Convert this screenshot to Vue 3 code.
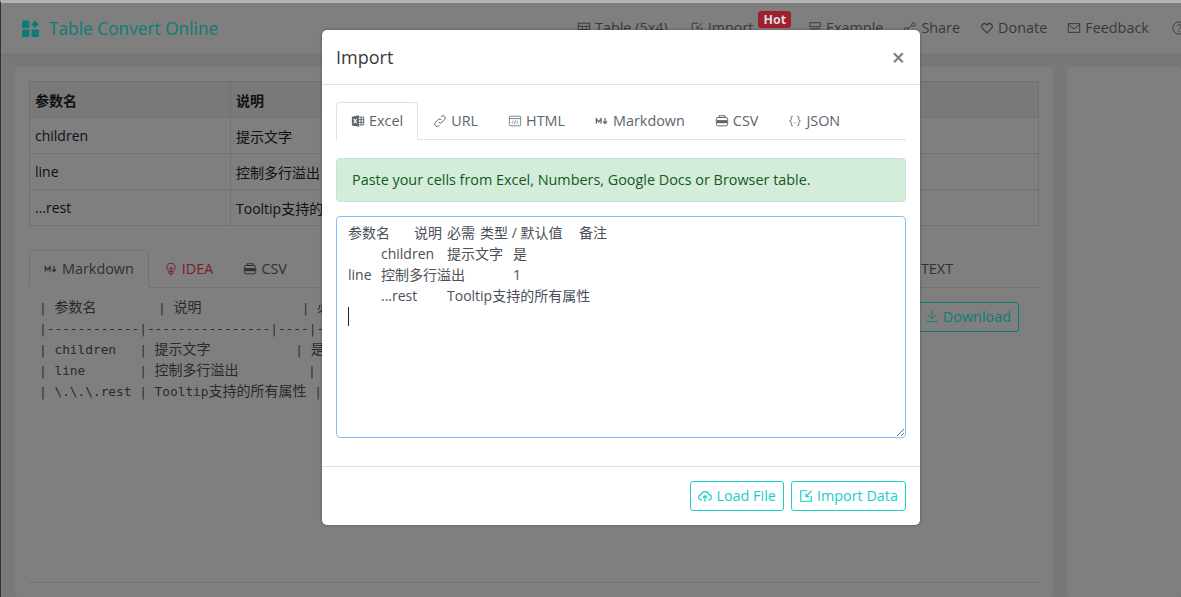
<script setup>
const navItems = [
  { label: 'Table (5x4)', icon: 'table' },
  { label: 'Import', icon: 'import', badge: 'Hot' },
  { label: 'Example', icon: 'example' },
  { label: 'Share', icon: 'share' },
  { label: 'Donate', icon: 'heart' },
  { label: 'Feedback', icon: 'mail' },
  { label: '', icon: 'help' }
]

const pageTabs = [
  { label: 'Markdown', icon: 'md', active: true },
  { label: 'IDEA', icon: 'bulb', danger: true },
  { label: 'CSV', icon: 'csv' }
]

const modalTabs = [
  { label: 'Excel', icon: 'excel', active: true },
  { label: 'URL', icon: 'link' },
  { label: 'HTML', icon: 'html' },
  { label: 'Markdown', icon: 'md' },
  { label: 'CSV', icon: 'csv' },
  { label: 'JSON', icon: 'json' }
]

const rows = [
  ['children', '提示文字'],
  ['line', '控制多行溢出'],
  ['...rest', 'Tooltip支持的所有属性']
]

const pasted = '参数名\t说明\t必需\t类型 / 默认值\t备注\n\tchildren\t提示文字\t是\nline\t控制多行溢出\t\t1\n\t...rest\tTooltip支持的所有属性\n'
</script>

<template>
  <div class="screen">
    <div class="page">
      <header class="topbar">
        <div class="brand">
          <svg class="brand-icon" viewBox="0 0 16 16" fill="currentColor">
            <rect x="0" y="0.5" width="7" height="7" rx="1" />
            <path d="M12.2 0.4 L15.8 4 L12.2 7.6 L8.6 4 Z" />
            <rect x="0" y="9" width="7" height="7" rx="1" />
            <rect x="9" y="9" width="7" height="7" rx="1" />
          </svg>
          <span>Table Convert Online</span>
        </div>
        <nav class="nav">
          <a v-for="item in navItems" :key="item.icon" class="nav-item">
            <svg class="icon" viewBox="0 0 16 16" fill="none" stroke="currentColor" stroke-width="1.1">
              <template v-if="item.icon === 'table'">
                <rect x="1.5" y="2.5" width="13" height="11" />
                <path d="M1.5 6h13M1.5 9.7h13M6 6v7.5M10.5 6v7.5" />
              </template>
              <template v-else-if="item.icon === 'import'">
                <path d="M13.5 7v6.5h-11v-11h7" />
                <path d="M14 2.5 8 8.5M8 5v3.7h3.7" />
              </template>
              <template v-else-if="item.icon === 'example'">
                <rect x="2" y="2" width="12" height="4.5" />
                <path d="M2 9h12M2 11.5h12M2 14h8" />
              </template>
              <template v-else-if="item.icon === 'share'">
                <circle cx="3.5" cy="9.5" r="2" />
                <circle cx="12" cy="4" r="2" />
                <circle cx="12" cy="13" r="2" />
                <path d="M5.2 8.4 10.3 5.1M5.3 10.4l5 1.9" />
              </template>
              <template v-else-if="item.icon === 'heart'">
                <path d="M8 13.5 2.7 8.2a3.2 3.2 0 0 1 4.5-4.5l.8.8.8-.8a3.2 3.2 0 0 1 4.5 4.5Z" stroke-width="1.4" />
              </template>
              <template v-else-if="item.icon === 'mail'">
                <rect x="1.5" y="3" width="13" height="10" />
                <path d="M1.5 4 8 9l6.500-5" />
              </template>
              <template v-else>
                <circle cx="8" cy="8" r="7" />
                <path d="M5.8 6.2a2.2 2.2 0 1 1 3.4 1.9C8.4 8.6 8 9 8 10M8 11.4v1.2" />
              </template>
            </svg>
            <span v-if="item.label">{{ item.label }}</span>
            <b v-if="item.badge" class="hot">{{ item.badge }}</b>
          </a>
        </nav>
      </header>

      <main class="content">
        <section class="card card-main">
          <table class="params">
            <thead>
              <tr>
                <th class="col-name">参数名</th>
                <th>说明</th>
              </tr>
            </thead>
            <tbody>
              <tr v-for="row in rows" :key="row[0]">
                <td v-for="(cell, i) in row" :key="i">{{ cell }}</td>
              </tr>
            </tbody>
          </table>

          <div class="tabs page-tabs">
            <a
              v-for="tab in pageTabs"
              :key="tab.label"
              class="tab"
              :class="{ active: tab.active, danger: tab.danger }"
            >
              <svg class="icon" viewBox="0 0 16 16" fill="none" stroke="currentColor" stroke-width="1.1">
                <template v-if="tab.icon === 'md'">
                  <path d="M1.5 11V5.5L4.2 9l2.7-3.5V11" stroke-width="1.4" />
                  <path d="M11.5 4.5v6M9.3 8.5l2.2 2.5 2.2-2.5" stroke-width="1.4" />
                </template>
                <template v-else-if="tab.icon === 'bulb'">
                  <circle cx="8" cy="6.2" r="4.7" />
                  <path d="M5.6 8 8 6.2 10.4 8M8 11V7M5.8 11h4.4v2.3H5.8zM7 15h2" />
                </template>
                <template v-else>
                  <path d="M4.5 4V2h7v2" />
                  <rect x="1.5" y="4" width="13" height="9.5" rx="2" />
                  <rect x="2" y="7" width="12" height="3.5" fill="currentColor" stroke="none" />
                </template>
              </svg>
              <span>{{ tab.label }}</span>
            </a>
            <a class="tab tab-text"><span>TEXT</span></a>
          </div>

          <div class="pane">
            <pre class="markdown"><i>|</i> <span class="cjk">参数名</span>        <i>|</i> <span class="cjk">说明</span>             <i>|</i> <span class="cjk">必需</span>
<i>|</i>------------<i>|</i>----------------<i>|</i>----<i>|</i>--------
<i>|</i> children   <i>|</i> <span class="cjk">提示文字</span>           <i>|</i> <span class="cjk">是</span>
<i>|</i> line       <i>|</i> <span class="cjk">控制多行溢出</span>         <i>|</i>
<i>|</i> \.\.\.rest <i>|</i> Tooltip<span class="cjk">支持的所有属性</span> <i>|</i></pre>
            <a class="download">
              <svg class="icon" viewBox="0 0 16 16" fill="none" stroke="currentColor" stroke-width="1.1">
                <path d="M8 1.5v9.5M3 6.5 8 11l5-4.5M1.5 14.5h13" />
              </svg>
              <span>Download</span>
            </a>
          </div>

          <hr class="divider" />
        </section>
        <aside class="card card-side"></aside>
      </main>
    </div>

    <div class="backdrop"></div>

    <div class="modal">
      <div class="modal-header">
        <h5>Import</h5>
        <span class="close">×</span>
      </div>
      <div class="modal-body">
        <div class="tabs modal-tabs">
          <a
            v-for="tab in modalTabs"
            :key="tab.label"
            class="tab"
            :class="{ active: tab.active }"
          >
            <svg class="icon" viewBox="0 0 16 16" fill="none" stroke="currentColor" stroke-width="1.1">
              <template v-if="tab.icon === 'excel'">
                <path d="M1 3 9 1.5v13L1 13Z" fill="currentColor" stroke="none" />
                <path d="M3.2 5.6 6.5 10.4M6.5 5.6 3.2 10.4" stroke="#fff" stroke-width="1.2" />
                <path d="M9 3.5h5.5v9H9M9 6.5h5.5M9 9.5h5.5M11.5 3.5v9" />
              </template>
              <template v-else-if="tab.icon === 'link'">
                <path d="M6.6 9.4a2.6 2.6 0 0 0 3.7 0l3-3a2.6 2.6 0 0 0-3.7-3.7l-1 1" />
                <path d="M9.4 6.6a2.6 2.6 0 0 0-3.7 0l-3 3a2.6 2.6 0 0 0 3.7 3.7l1-1" />
              </template>
              <template v-else-if="tab.icon === 'html'">
                <rect x="1.5" y="2.5" width="13" height="11" rx="1" stroke-width="0.9" />
                <path d="M1.5 5.3h13" stroke-width="0.9" />
                <path d="M6 7.6 4.4 9.4 6 11.2M10 7.6l1.6 1.8L10 11.2M8.7 7.4l-1.4 4" stroke-width="0.8" />
              </template>
              <template v-else-if="tab.icon === 'md'">
                <path d="M1.5 11V5.5L4.2 9l2.7-3.5V11" stroke-width="1.4" />
                <path d="M11.5 4.5v6M9.3 8.5l2.2 2.5 2.2-2.5" stroke-width="1.4" />
              </template>
              <template v-else-if="tab.icon === 'csv'">
                <path d="M4.5 4V2h7v2" />
                <rect x="1.5" y="4" width="13" height="9.5" rx="2" />
                <rect x="2" y="7" width="12" height="3.5" fill="currentColor" stroke="none" />
              </template>
              <template v-else>
                <path d="M5.5 2.5c-2.400 0-1.800 1.500-1.800 3S3.500 7.500 1.800 8c1.700.5 1.900 1 1.900 2.500s-.6 3 1.800 3M10.500 2.500c2.400 0 1.800 1.500 1.800 3s.2 2 1.900 2.500c-1.700.5-1.900 1-1.900 2.500s.6 3-1.800 3" />
                <path d="M6.500 10.200h.8M8.700 10.200h.8" />
              </template>
            </svg>
            <span>{{ tab.label }}</span>
          </a>
        </div>

        <div class="alert">Paste your cells from Excel, Numbers, Google Docs or Browser table.</div>

        <div class="field">
          <textarea class="paste" :value="pasted" spellcheck="false"></textarea>
          <span class="caret"></span>
        </div>
      </div>
      <div class="modal-footer">
        <a class="btn">
          <svg class="icon" viewBox="0 0 16 16" fill="none" stroke="currentColor" stroke-width="1.3">
            <path d="M4.500 12.500H4a3 3 0 0 1-.4-6 4.500 4.500 0 0 1 8.800 0 3 3 0 0 1-.4 6h-.5" />
            <path d="M8 14.500V8M5.500 10 8 7.500l2.500 2.500" />
          </svg>
          <span>Load File</span>
        </a>
        <a class="btn">
          <svg class="icon" viewBox="0 0 16 16" fill="none" stroke="currentColor" stroke-width="1.3">
            <path d="M14 8v6H2V2h7" />
            <path d="M14.500 2 8 8.500M8 5v3.700h3.700" />
          </svg>
          <span>Import Data</span>
        </a>
      </div>
    </div>
  </div>
</template>

<style>
html,
body {
  margin: 0;
  overflow: hidden;
}
</style>

<style scoped>
.screen {
  position: relative;
  width: 1181px;
  height: 597px;
  box-sizing: border-box;
  overflow: hidden;
  border-top: 3px solid #b4b4b4;
  border-left: 1px solid #333;
  font-family: "Open Sans", "Noto Sans CJK SC", sans-serif;
  font-size: 14.4px;
  color: #212529;
}

.page {
  display: flex;
  flex-direction: column;
  height: 100%;
  background: #f0f0f0;
}

.topbar {
  display: flex;
  flex: none;
  align-items: center;
  height: 50px;
  padding-left: 21px;
  background: #fff;
}

.brand {
  display: flex;
  flex: none;
  align-items: center;
  gap: 10px;
  width: 555px;
  font-size: 17.3px;
  color: #18f8f0;
}

.brand-icon {
  width: 17px;
  height: 17px;
}

.nav {
  display: flex;
  flex: none;
  align-items: center;
  gap: 20px;
  margin-top: -1px;
  color: #6c757d;
}

.nav-item {
  position: relative;
  display: flex;
  align-items: center;
  gap: 4px;
  white-space: nowrap;
}

.nav-item:first-child {
  margin-right: 2px;
}

.nav-item:last-child {
  margin-left: 3px;
}

.icon {
  flex: none;
  width: 14px;
  height: 14px;
}

.hot {
  position: relative;
  z-index: 1;
  margin: -16px -3px 0 1px;
  padding: 0 5px;
  border-radius: 3px;
  background: #a01f30;
  color: #ddd;
  font-size: 12.4px;
  line-height: 17px;
}

.content {
  display: grid;
  flex: 1;
  grid-template-columns: 1038px 1fr;
  gap: 14px;
  padding: 14px;
  margin-right: -14px;
  min-height: 0;
}

.card {
  background: #fff;
  border-radius: 4px;
}

.card-main {
  padding: 14px;
}

.params {
  width: 100%;
  border-collapse: collapse;
  table-layout: fixed;
  font-size: 14px;
}

.params th,
.params td {
  height: 35px;
  padding: 0 5px;
  border: 1px solid #dee2e6;
  text-align: left;
  white-space: nowrap;
  overflow: hidden;
}

.params th {
  background: #f2f2f2;
  font-weight: 700;
}

.col-name {
  width: 190px;
}

.tabs {
  display: flex;
  border-bottom: 1px solid #dee2e6;
}

.page-tabs {
  margin-top: 24px;
}

.tab {
  display: flex;
  align-items: center;
  gap: 4px;
  height: 35px;
  padding: 0 14px 1px;
  margin-bottom: -1px;
  border: 1px solid transparent;
  border-radius: 4px 4px 0 0;
  box-sizing: content-box;
  color: #5c656d;
  white-space: nowrap;
}

.tab.active {
  border-color: #dee2e6 #dee2e6 #fff;
  background: #fff;
}

.tab.danger {
  color: #f23c55;
}

.tab-text {
  margin-left: 604px;
}

.pane {
  display: flex;
  justify-content: space-between;
  height: 294px;
}

.markdown {
  margin: 9px 0 0 10px;
  font-family: "DejaVu Sans Mono", monospace;
  font-size: 12.8px;
  line-height: 21px;
  color: #555;
}

.markdown i {
  font-style: normal;
  color: #4a6a8a;
}

.cjk {
  font-family: "Noto Sans CJK SC", sans-serif;
  font-size: 14px;
  line-height: 1;
}

.download {
  display: flex;
  flex: none;
  align-items: center;
  align-self: flex-start;
  gap: 4px;
  height: 26px;
  margin: 14px 20px 0 0;
  padding: 0 7px 2px;
  border: 1px solid #18f8f0;
  border-radius: 3px;
  color: #18f8f0;
}

.divider {
  margin: 0;
  border: 0;
  border-top: 1px solid #dee2e6;
}

.backdrop {
  position: absolute;
  inset: 0;
  background: rgba(0, 0, 0, 0.5);
}

.modal {
  position: absolute;
  z-index: 2;
  top: 27px;
  left: 321px;
  width: 598px;
  height: 495px;
  display: flex;
  flex-direction: column;
  background: #fff;
  border-radius: 5px;
  box-shadow: 0 0 3px rgba(0, 0, 0, 0.35);
}

.modal-header {
  display: flex;
  flex: none;
  align-items: center;
  justify-content: space-between;
  height: 54px;
  padding: 0 14px;
  border-bottom: 1px solid #dee2e6;
}

.modal-header h5 {
  margin: 0;
  font-size: 18px;
  font-weight: 400;
  color: #343a40;
}

.close {
  margin-right: 1px;
  font-size: 23px;
  font-weight: 600;
  line-height: 1;
  color: #808080;
}

.modal-body {
  flex: 1;
  padding: 17px 14px 0;
}

.alert {
  margin-top: 18px;
  padding: 11px 15px;
  border: 1px solid #c3e6cb;
  border-radius: 4px;
  background: #d4edda;
  color: #155724;
  line-height: 20px;
}

.field {
  position: relative;
  margin-top: 14px;
}

.paste {
  display: block;
  width: 100%;
  height: 222px;
  box-sizing: border-box;
  padding: 5px 11px 6px;
  border: 1px solid #80bdff;
  border-radius: 4px;
  outline: 0;
  font: inherit;
  font-size: 14px;
  line-height: 21px;
  tab-size: 33px;
  color: #495057;
}

.caret {
  position: absolute;
  top: 91px;
  left: 12px;
  width: 1px;
  height: 19px;
  background: #222;
}

.modal-footer {
  display: flex;
  flex: none;
  align-items: center;
  justify-content: flex-end;
  gap: 7px;
  height: 58px;
  padding: 0 14px;
  border-top: 1px solid #dee2e6;
}

.btn {
  display: flex;
  align-items: center;
  gap: 4px;
  height: 27px;
  padding: 0 7px 1px;
  border: 1px solid #17cfc9;
  border-radius: 3px;
  color: #17cfc9;
}
</style>
